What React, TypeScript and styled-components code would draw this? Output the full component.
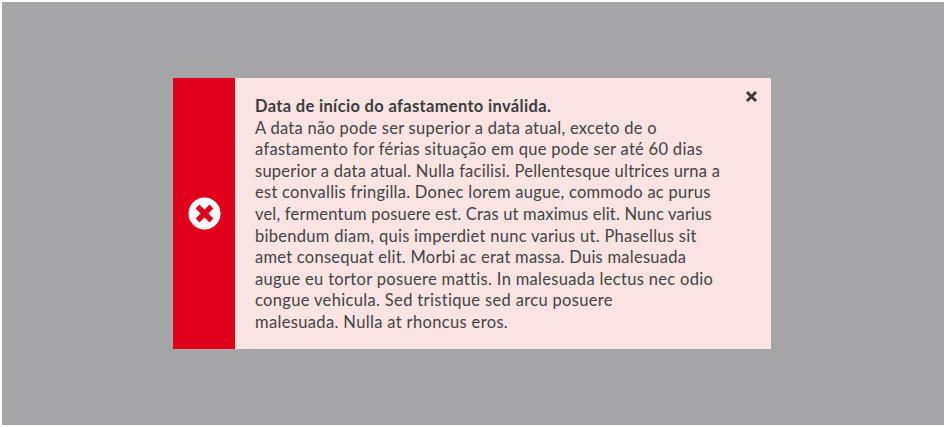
import React from "react";
import styled, { createGlobalStyle } from "styled-components";

const Global = createGlobalStyle`
  html, body { margin: 0; padding: 0; background: #fff; }
  #root { width: 946px; height: 427px; }
`;

const Page = styled.div`
  box-sizing: border-box;
  width: 946px;
  height: 427px;
  padding: 2px;
  display: flex;
`;

const Backdrop = styled.div`
  flex: 1;
  background: #a5a5a7;
  display: flex;
  align-items: center;
  justify-content: center;
`;

const Alert = styled.div`
  width: 598px;
  height: 271px;
  margin-right: 2px;
  display: flex;
  background: #fae3e3;
  position: relative;
`;

const Side = styled.div`
  width: 62px;
  flex: none;
  background: #e0001b;
  display: flex;
  align-items: center;
  justify-content: center;
`;

const Body = styled.div`
  flex: 1;
  padding: 18px 0 0 20px;
  font-family: "Lato", "Liberation Sans", sans-serif;
  font-size: 16.5px;
  line-height: 21.6px;
  color: #444;
`;

const Title = styled.div`
  font-weight: 700;
  white-space: nowrap;
  letter-spacing: 0.33px;
  color: #3c3c3c;
`;

const Line = styled.div<{ $spacing: number }>`
  white-space: nowrap;
  letter-spacing: ${(p) => p.$spacing}px;
`;

const Close = styled.button`
  position: absolute;
  top: 12px;
  right: 13px;
  width: 13px;
  height: 13px;
  padding: 0;
  border: 0;
  background: none;
  display: flex;
`;

const lines: [string, number][] = [
  ["A data não pode ser superior a data atual, exceto de o", 0.28],
  ["afastamento for férias situação em que pode ser até 60 dias", 0.3],
  ["superior a data atual. Nulla facilisi. Pellentesque ultrices urna a", 0.25],
  ["est convallis fringilla. Donec lorem augue, commodo ac purus", 0.26],
  ["vel, fermentum posuere est. Cras ut maximus elit. Nunc varius", 0.19],
  ["bibendum diam, quis imperdiet nunc varius ut. Phasellus sit", 0.29],
  ["amet consequat elit. Morbi ac erat massa. Duis malesuada", 0.26],
  ["augue eu tortor posuere mattis. In malesuada lectus nec odio", 0.32],
  ["congue vehicula. Sed tristique sed arcu posuere", 0.34],
  ["malesuada. Nulla at rhoncus eros.", 0.35],
];

export default function App() {
  return (
    <Page>
      <Global />
      <Backdrop>
        <Alert>
          <Side>
            <svg width="33" height="33" viewBox="0 0 33 33">
              <circle cx="16.5" cy="16.5" r="16" fill="#fff" />
              <path d="M11.5 11.5 L21.5 21.5 M21.5 11.5 L11.5 21.5" stroke="#e0001b" strokeWidth="5.5" strokeLinecap="square" />
            </svg>
          </Side>
          <Body>
            <Title>Data de início do afastamento inválida.</Title>
            {lines.map(([t, s]) => (
              <Line key={t} $spacing={s}>{t}</Line>
            ))}
          </Body>
          <Close aria-label="Fechar">
            <svg width="13" height="13" viewBox="0 0 13 13">
              <path d="M3 3 L10 10 M10 3 L3 10" stroke="#3c3c3c" strokeWidth="3" strokeLinecap="square" />
            </svg>
          </Close>
        </Alert>
      </Backdrop>
    </Page>
  );
}
